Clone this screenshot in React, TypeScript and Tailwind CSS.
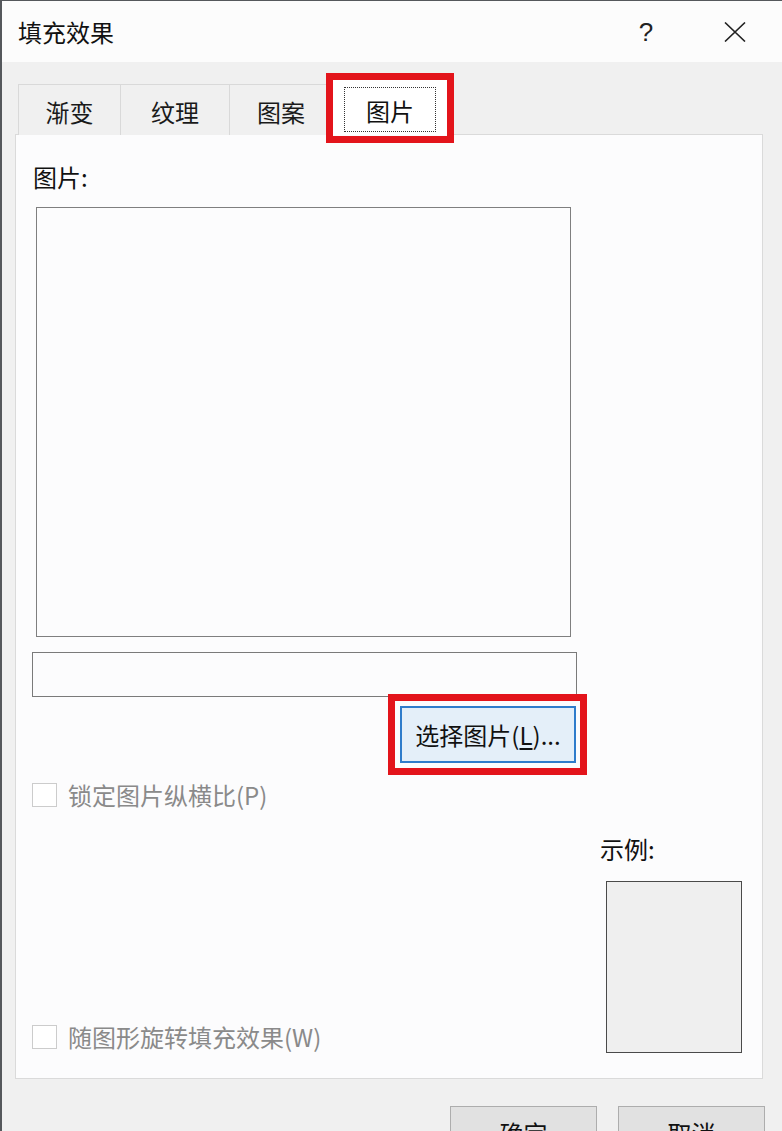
import React from "react";

const font = "font-['Noto_Sans_CJK_SC','Microsoft_YaHei',sans-serif]";

function Tab({ label, width }: { label: string; width: string }) {
  return (
    <div
      className={`${width} h-[51px] flex items-center justify-center border-t border-l border-[#d9d9d9] bg-[#f0f0f0] text-[24px] leading-[30px] text-[#1a1a1a] pt-[4px]`}
    >
      {label}
    </div>
  );
}

function Checkbox({ label }: { label: string }) {
  return (
    <div className="flex items-center">
      <div className="w-[25px] h-[24px] border border-[#cccccc] bg-white" />
      <span className="ml-[11px] text-[24px] leading-[24px] text-[#8a8a8a]">{label}</span>
    </div>
  );
}

export default function App() {
  return (
    <div
      className={`w-[782px] h-[1131px] overflow-hidden bg-[#f0f0f0] border-l-2 border-t border-[#55585c] ${font}`}
    >
      {/* Title bar */}
      <div className="h-[61px] bg-[#fcfcfc] flex items-center pl-[16px]">
        <span className="text-[24px] leading-[30px] text-[#111]">填充效果</span>
        <span className="ml-auto w-[40px] text-center text-[26px] leading-[30px] text-[#222] font-['Liberation_Sans',sans-serif]">
          ?
        </span>
        <div className="ml-[49px] mr-[27px] w-[40px] flex items-center justify-center">
          <svg width="22" height="20" viewBox="0 0 22 20">
            <path d="M1 0.5 L21 19.5 M21 0.5 L1 19.5" stroke="#222" strokeWidth="1.6" fill="none" />
          </svg>
        </div>
      </div>

      {/* Tabs */}
      <div className="h-[73px] flex items-end pl-[16px]">
        <Tab label="渐变" width="w-[102px]" />
        <Tab label="纹理" width="w-[109px]" />
        <Tab label="图案" width="w-[103px]" />
        <div className="relative z-10 w-[116px] h-[58px] bg-white border border-b-0 border-[#d9d9d9]">
          <div className="absolute left-[11px] right-[11px] top-[9px] bottom-[3px] border border-dotted border-[#333] flex items-center justify-center text-[24px] leading-[30px] text-[#111] pt-[2px]">
            图片
          </div>
          <div className="absolute -left-[7px] -right-[7px] -top-[5px] -bottom-[8px] border-[7px] border-[#e3141b]" />
        </div>
      </div>

      {/* Panel */}
      <div className="-mt-px ml-[13px] w-[748px] h-[945px] bg-[#fcfcfd] border border-[#dadada] flex flex-col">
        <div className="mt-[27px] ml-[17px] text-[24px] leading-[30px] text-[#111]">图片:</div>
        <div className="mt-[15px] ml-[20px] w-[535px] h-[430px] border border-[#7f7f7f] bg-[#fcfcfd]" />
        <div className="mt-[15px] ml-[16px] w-[545px] h-[45px] border border-[#7a7a7a] bg-[#fcfcfd]" />
        <div className="mt-[9px] ml-[384px] relative w-[176px] h-[57px]">
          <button className="w-full h-full border-2 border-[#2f7ccb] bg-[#e4eff9] text-[24px] leading-[30px] text-[#111] flex items-center justify-center">
            选择图片(<span className="underline underline-offset-[3px]">L</span>)...
          </button>
          <div className="absolute -left-[12px] -right-[11px] -top-[12px] -bottom-[12px] border-[7px] border-[#e3141b]" />
        </div>
        <div className="mt-[20px] ml-[16px]">
          <Checkbox label="锁定图片纵横比(P)" />
        </div>
        <div className="mt-[27px] flex items-end">
          <div className="ml-[16px] mb-[4px]">
            <Checkbox label="随图形旋转填充效果(W)" />
          </div>
          <div className="ml-auto mr-[20px] flex flex-col items-start">
            <div className="-ml-[6px] text-[24px] leading-[30px] text-[#111]">示例:</div>
            <div className="mt-[17px] w-[136px] h-[172px] border border-[#4a4a4a] bg-[#efefef]" />
          </div>
        </div>
      </div>

      {/* Bottom buttons */}
      <div className="mt-[27px] flex justify-end gap-[21px] pr-[17px]">
        <button className="w-[147px] h-[54px] border border-[#adadad] bg-[#e1e1e1] text-[24px] leading-[30px] text-[#111]">
          确定
        </button>
        <button className="w-[147px] h-[54px] border border-[#adadad] bg-[#e1e1e1] text-[24px] leading-[30px] text-[#111]">
          取消
        </button>
      </div>
    </div>
  );
}
